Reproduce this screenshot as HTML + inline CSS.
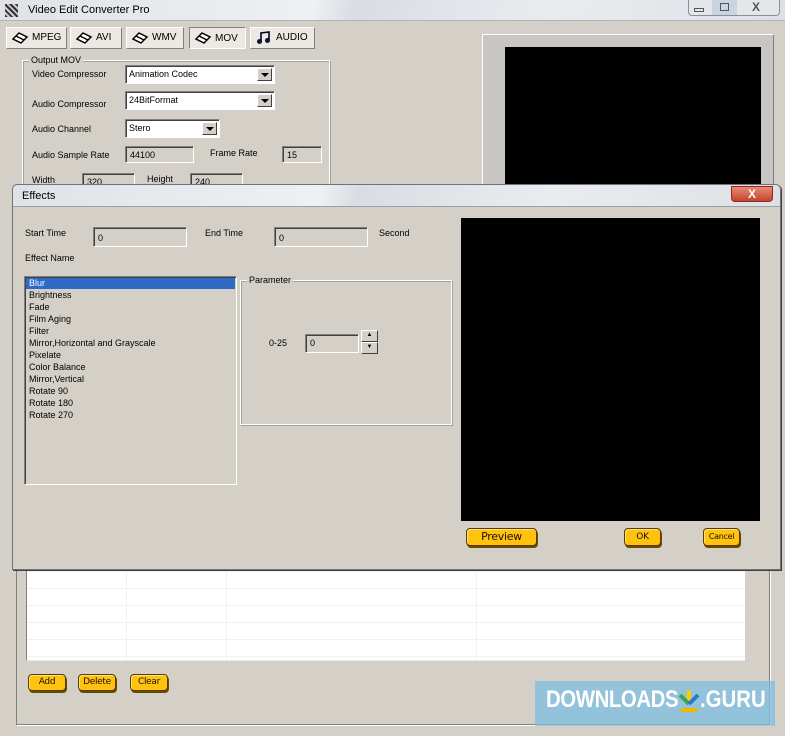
<!DOCTYPE html>
<html><head><style>
*{margin:0;padding:0;box-sizing:border-box}
body{width:785px;height:736px;background:#d4d0c8;position:relative;overflow:hidden;font-family:"Liberation Sans",sans-serif;font-size:9px;color:#000}
.a{position:absolute}
.tb{background:linear-gradient(100deg,#dfe2e7 0%,#eef0f3 40%,#d9dde3 45%,#e9ecef 70%,#dde0e5 100%)}
.tab{position:absolute;top:27px;height:22px;background:#ece9e2;border:1px solid #fff;border-right-color:#808080;border-bottom-color:#808080;font-size:10px;line-height:20px;padding-left:25px;white-space:nowrap}
.tab svg{position:absolute;left:4px;top:3px}
.in{position:absolute;background:#d4d0c8;border:1px solid #808080;border-right-color:#fff;border-bottom-color:#fff;box-shadow:inset 1px 1px 0 #404040;padding:3px 0 0 4px;font-size:9px}
.sel{position:absolute;background:#fff;border:1px solid #808080;border-right-color:#fff;border-bottom-color:#fff;box-shadow:inset 1px 1px 0 #404040;padding:3px 0 0 3px;font-size:9px}
.sel b{position:absolute;right:2px;top:2px;width:15px;height:13px;background:#d4d0c8;border:1px solid #fff;border-right-color:#404040;border-bottom-color:#404040}
.sel b:after{content:"";position:absolute;left:3px;top:4px;border:4px solid transparent;border-top:4px solid #000;border-bottom:0}
.btn{position:absolute;background:#ffc20e;border:1px solid #5a3c00;border-radius:4px;box-shadow:1px 2px 0 #6b4a00,inset 1px 1px 0 #ffe27a;font-family:"DejaVu Sans",sans-serif;font-size:9px;text-align:center;color:#201000;white-space:nowrap;letter-spacing:-0.3px}
.grp{position:absolute;border:1px solid #fff;box-shadow:inset 1px 1px 0 #a0a0a0,1px 1px 0 #a0a0a0}
.grp span{position:absolute;top:-6px;left:6px;background:#d4d0c8;padding:0 2px;font-size:9px}
</style></head><body>
<div class="a tb" style="left:0;top:0;width:785px;height:21px;border-bottom:1px solid #b0b4ba"></div>
<div class="a" style="left:5px;top:4px;width:13px;height:13px;background:repeating-linear-gradient(45deg,#333 0 2px,#ccc 2px 4px)"></div>
<div class="a" style="left:28px;top:4px;font-size:11px">Video Edit Converter Pro</div>
<div class="a" style="left:688px;top:0;width:92px;height:16px;border:1px solid #8a8f98;border-top:0;border-radius:0 0 4px 4px;background:#e4e6ea"></div>
<div class="a" style="left:712px;top:0;width:25px;height:15px;background:#c9d3e2"></div>
<div class="a" style="left:694px;top:8px;width:10px;height:4px;border:1px solid #555"></div>
<div class="a" style="left:720px;top:3px;width:9px;height:8px;border:1px solid #555"></div>
<div class="a" style="left:752px;top:0px;font-size:12px;font-weight:bold;color:#555">X</div>
<div class="tab" style="left:6px;width:61px"><svg width="18" height="14"><path d="M2 8 L8 2 L16 6 L10 12 Z M5 5 L13 9" stroke="#000" fill="#fff" stroke-width="1.5"/></svg>MPEG</div>
<div class="tab" style="left:70px;width:52px"><svg width="18" height="14"><path d="M2 8 L8 2 L16 6 L10 12 Z M5 5 L13 9" stroke="#000" fill="#fff" stroke-width="1.5"/></svg>AVI</div>
<div class="tab" style="left:126px;width:58px"><svg width="18" height="14"><path d="M2 8 L8 2 L16 6 L10 12 Z M5 5 L13 9" stroke="#000" fill="#fff" stroke-width="1.5"/></svg>WMV</div>
<div class="tab" style="left:189px;width:57px;border-color:#808080 #fff #fff #808080;padding-top:1px"><svg width="18" height="14"><path d="M2 8 L8 2 L16 6 L10 12 Z M5 5 L13 9" stroke="#000" fill="#fff" stroke-width="1.5"/></svg>MOV</div>
<div class="tab" style="left:250px;width:65px"><svg width="18" height="14"><path d="M6 10 V2 L14 1 V9" stroke="#002" fill="none" stroke-width="1.6"/><circle cx="4.5" cy="10.5" r="2.5" fill="#113"/><circle cx="12.5" cy="9.5" r="2.5" fill="#113"/></svg>AUDIO</div>
<div class="grp" style="left:22px;top:60px;width:308px;height:140px"><span>Output MOV</span></div>
<div class="a" style="left:32px;top:69px">Video Compressor</div>
<div class="sel" style="left:125px;top:65px;width:150px;height:19px">Animation Codec<b></b></div>
<div class="a" style="left:32px;top:99px">Audio Compressor</div>
<div class="sel" style="left:125px;top:91px;width:150px;height:19px">24BitFormat<b></b></div>
<div class="a" style="left:32px;top:124px">Audio Channel</div>
<div class="sel" style="left:125px;top:119px;width:95px;height:19px">Stero<b></b></div>
<div class="a" style="left:32px;top:150px">Audio Sample Rate</div>
<div class="in" style="left:125px;top:146px;width:69px;height:17px">44100</div>
<div class="a" style="left:210px;top:148px">Frame Rate</div>
<div class="in" style="left:282px;top:146px;width:40px;height:17px">15</div>
<div class="a" style="left:32px;top:175px">Width</div>
<div class="in" style="left:82px;top:173px;width:53px;height:17px">320</div>
<div class="a" style="left:147px;top:174px">Height</div>
<div class="in" style="left:190px;top:173px;width:53px;height:17px">240</div>
<div class="a" style="left:482px;top:34px;width:292px;height:160px;background:#c8c6c2;border:1px solid #fff;border-right-color:#808080"></div>
<div class="a" style="left:505px;top:47px;width:256px;height:150px;background:#000"></div>
<div class="a" style="left:16px;top:195px;width:754px;height:530px;border:1px solid #808080;border-top:0;box-shadow:1px 1px 0 #fff"></div>
<div class="a" style="left:26px;top:566px;width:719px;height:95px;background:#fff;border-left:1px solid #808080;border-bottom:1px solid #e8e8e8;
background-image:linear-gradient(#eef2f2 1px,transparent 1px),linear-gradient(90deg,transparent 99px,#eef2f2 99px,#eef2f2 100px,transparent 100px,transparent 199px,#eef2f2 199px,#eef2f2 200px,transparent 200px,transparent 449px,#eef2f2 449px,#eef2f2 450px,transparent 450px);background-size:100% 17px,100% 100%;background-position:0 5px,0 0"></div>
<div class="btn" style="left:28px;top:674px;width:38px;height:17px;line-height:15px">Add</div>
<div class="btn" style="left:78px;top:674px;width:38px;height:17px;line-height:15px">Delete</div>
<div class="btn" style="left:130px;top:674px;width:38px;height:17px;line-height:15px">Clear</div>
<div class="a" style="left:12px;top:184px;width:769px;height:386px;background:#d4d0c8;border:1px solid #6e737b;border-radius:5px 5px 0 0;box-shadow:1px 1px 0 #404040"></div>
<div class="a tb" style="left:13px;top:185px;width:767px;height:22px;border-radius:5px 5px 0 0;border-bottom:1px solid #9aa0a8"></div>
<div class="a" style="left:22px;top:190px;font-size:11px">Effects</div>
<div class="a" style="left:731px;top:186px;width:42px;height:16px;background:linear-gradient(#e88a78,#c4452e);border:1px solid #8a2a1a;border-radius:0 0 4px 4px;color:#fff;font-weight:bold;font-size:12px;text-align:center;line-height:14px">X</div>
<div class="a" style="left:25px;top:228px">Start Time</div>
<div class="in" style="left:93px;top:227px;width:94px;height:20px;padding-top:5px">0</div>
<div class="a" style="left:205px;top:228px">End Time</div>
<div class="in" style="left:274px;top:227px;width:94px;height:20px;padding-top:5px">0</div>
<div class="a" style="left:379px;top:228px">Second</div>
<div class="a" style="left:25px;top:253px">Effect Name</div>
<div class="a" style="left:24px;top:276px;width:213px;height:209px;border:1px solid #808080;border-right-color:#fff;border-bottom-color:#fff;box-shadow:inset 1px 1px 0 #404040;line-height:12px;padding-top:1px">
<div style="background:#316ac5;color:#fff;margin:0 1px 0 1px;padding-left:3px;height:11px;line-height:11px">Blur</div>
<div style="padding-left:4px">Brightness<br>Fade<br>Film Aging<br>Filter<br>Mirror,Horizontal and Grayscale<br>Pixelate<br>Color Balance<br>Mirror,Vertical<br>Rotate 90<br>Rotate 180<br>Rotate 270</div></div>
<div class="grp" style="left:240px;top:280px;width:212px;height:145px"><span>Parameter</span></div>
<div class="a" style="left:269px;top:338px">0-25</div>
<div class="in" style="left:305px;top:334px;width:54px;height:19px">0</div>
<div class="a" style="left:361px;top:330px;width:17px;height:12px;background:#d4d0c8;border:1px solid #fff;border-right-color:#404040;border-bottom-color:#404040;font-size:6px;text-align:center;line-height:9px">▲</div>
<div class="a" style="left:361px;top:342px;width:17px;height:12px;background:#d4d0c8;border:1px solid #fff;border-right-color:#404040;border-bottom-color:#404040;font-size:6px;text-align:center;line-height:9px">▼</div>
<div class="a" style="left:461px;top:218px;width:299px;height:303px;background:#000"></div>
<div class="btn" style="left:466px;top:528px;width:71px;height:18px;line-height:16px;font-size:11px">Preview</div>
<div class="btn" style="left:624px;top:528px;width:37px;height:18px;line-height:16px">OK</div>
<div class="btn" style="left:703px;top:528px;width:37px;height:18px;line-height:16px;font-size:8px">Cancel</div>
<div class="a" style="left:535px;top:681px;width:240px;height:45px;background:rgba(125,190,225,0.75)"></div>
<div class="a" style="left:546px;top:686px;font-size:24px;font-weight:bold;color:#fff;letter-spacing:-0.5px;transform:scaleX(0.85);transform-origin:left">DOWNLOADS</div>
<svg class="a" style="left:677px;top:689px" width="24" height="26"><path d="M12 1 V13" stroke="#f5d000" stroke-width="4"/><path d="M3 6 L12 15" stroke="#3aa84a" stroke-width="4"/><path d="M21 6 L12 15" stroke="#2a7ad0" stroke-width="4"/><rect x="4" y="19" width="16" height="4" fill="#f5b400"/></svg>
<div class="a" style="left:700px;top:686px;font-size:24px;font-weight:bold;color:#fff;transform:scaleX(0.85);transform-origin:left">.GURU</div>
</body></html>
